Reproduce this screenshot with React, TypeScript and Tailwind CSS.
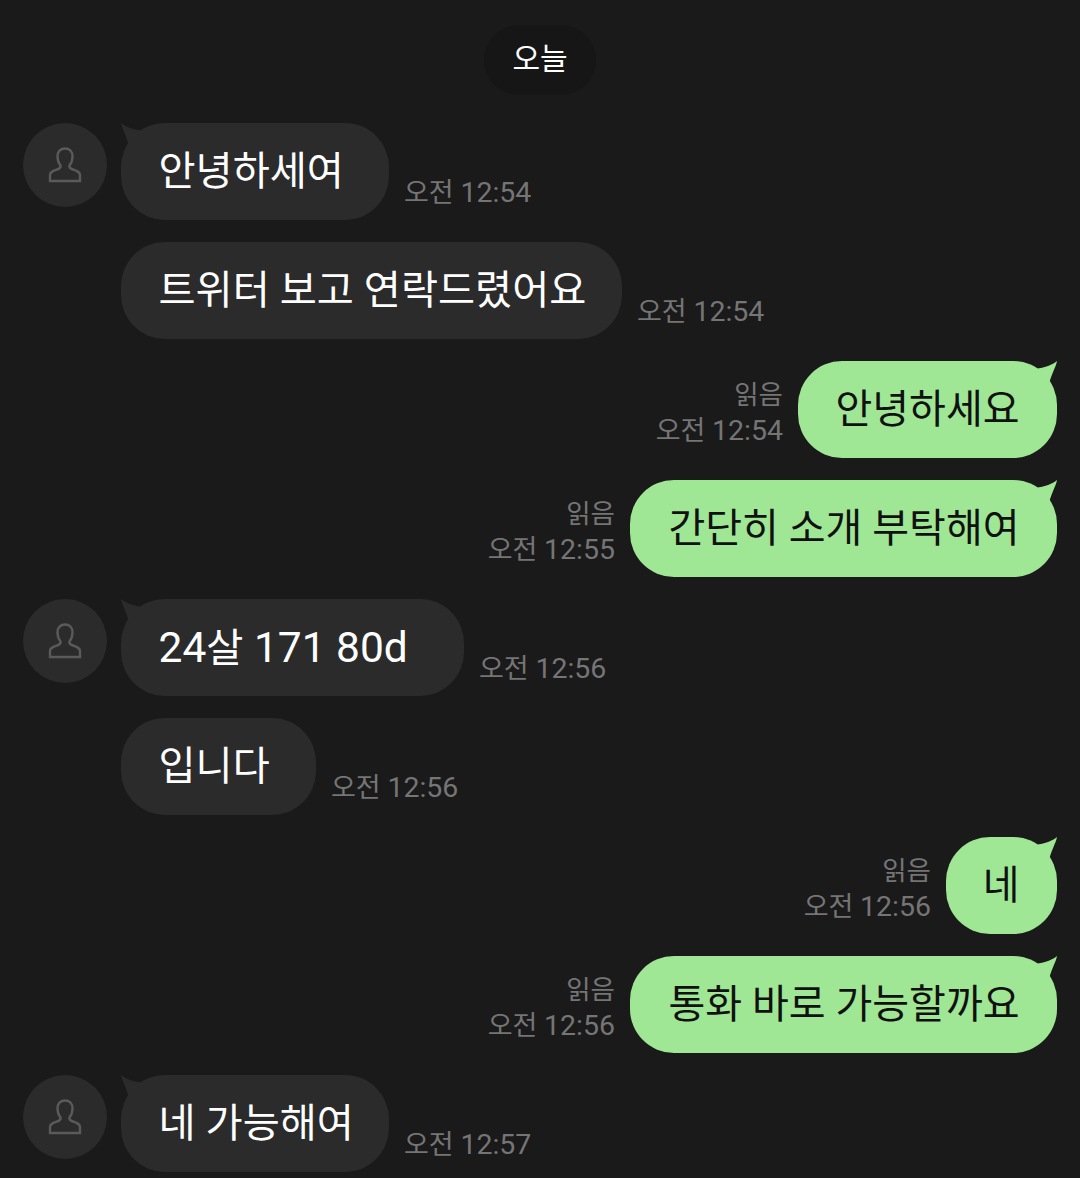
const font = { fontFamily: 'Roboto, "Noto Sans CJK KR", sans-serif' };

function Avatar() {
  return (
    <div className="flex h-[84px] w-[84px] shrink-0 items-center justify-center rounded-full bg-[#2b2b2b]">
      <svg width="34" height="36" viewBox="0 0 34 36" fill="none" stroke="#5a5a5a" strokeWidth="2.4">
        <path d="M2 34 V28 C2 25 5 24 9 22.5 C12 21.5 13 20.5 12.5 18.5 C10.5 16 9.5 13 9.5 9.5 C9.5 4.5 12.5 1.5 17 1.5 C21.5 1.5 24.5 4.5 24.5 9.5 C24.5 13 23.5 16 21.5 18.5 C21 20.5 22 21.5 25 22.5 C29 24 32 25 32 28 V34 Z" />
      </svg>
    </div>
  );
}

function Time({ text }: { text: string }) {
  return (
    <span className="whitespace-nowrap">
      오전 <span className="text-[28.5px]">{text}</span>
    </span>
  );
}

function Incoming({ children, time, avatar, width }: { children: React.ReactNode; time: string; avatar?: boolean; width: string }) {
  return (
    <div className="flex items-end">
      <div className="mr-[14px] w-[84px] shrink-0 self-start">{avatar && <Avatar />}</div>
      <div className={`relative flex h-[97px] items-center rounded-[44px] bg-[#2b2b2b] pl-[37.5px] pt-[2px] text-[40.3px] leading-none text-white ${width}`}>
        {avatar && (
          <svg className="absolute left-0 top-0" width="24" height="24" viewBox="0 0 24 24" fill="#2b2b2b">
            <path d="M0 0 C4 3 10 7 24 8 L8 24 C7 16 1 6 0 0 Z" />
          </svg>
        )}
        <span className="relative whitespace-nowrap">{children}</span>
      </div>
      <span className="mb-[11px] ml-[15px] text-[27px] leading-[32px] text-[#757575]">
        <Time text={time} />
      </span>
    </div>
  );
}

function Outgoing({ children, time, width }: { children: React.ReactNode; time: string; width: string }) {
  return (
    <div className="flex items-end justify-end">
      <div className="mb-[9px] mr-[15px] flex flex-col items-end text-[27px] leading-[36px] text-[#757575]">
        <span className="text-[26.5px]">읽음</span>
        <Time text={time} />
      </div>
      <div className={`relative flex h-[97px] items-center justify-end rounded-[44px] bg-[#9fe795] pr-[37.5px] text-[40px] leading-none text-[#111111] ${width}`}>
        <svg className="absolute right-0 top-0" width="24" height="24" viewBox="0 0 24 24" fill="#9fe795">
          <path d="M24 0 C20 3 14 7 0 8 L16 24 C17 16 23 6 24 0 Z" />
        </svg>
        <span className="relative whitespace-nowrap">{children}</span>
      </div>
    </div>
  );
}

export default function App() {
  return (
    <div className="h-[1178px] w-[1080px] overflow-hidden bg-[#1a1a1a] pl-[23px] pr-[23px] pt-[25px]" style={font}>
      <div className="flex justify-center">
        <div className="flex h-[70px] w-[112px] items-center justify-center rounded-[35px] bg-[#161616] pb-[3px] text-[30px] leading-none text-white">오늘</div>
      </div>
      <div className="mt-[28px] flex flex-col gap-[22px]">
        <Incoming avatar width="w-[268px]" time="12:54">안녕하세여</Incoming>
        <Incoming width="w-[501px]" time="12:54">트위터 보고 연락드렸어요</Incoming>
        <Outgoing width="w-[259px]" time="12:54">안녕하세요</Outgoing>
        <Outgoing width="w-[427px]" time="12:55">간단히 소개 부탁해여</Outgoing>
        <Incoming avatar width="w-[343px]" time="12:56">
          <span className="text-[42.5px]">24</span>살<span className="text-[42.5px]"> 171 80d</span>
        </Incoming>
        <Incoming width="w-[195px]" time="12:56">입니다</Incoming>
        <Outgoing width="w-[111px]" time="12:56">네</Outgoing>
        <Outgoing width="w-[427px]" time="12:56">통화 바로 가능할까요</Outgoing>
        <Incoming avatar width="w-[268px]" time="12:57">네 가능해여</Incoming>
      </div>
    </div>
  );
}
